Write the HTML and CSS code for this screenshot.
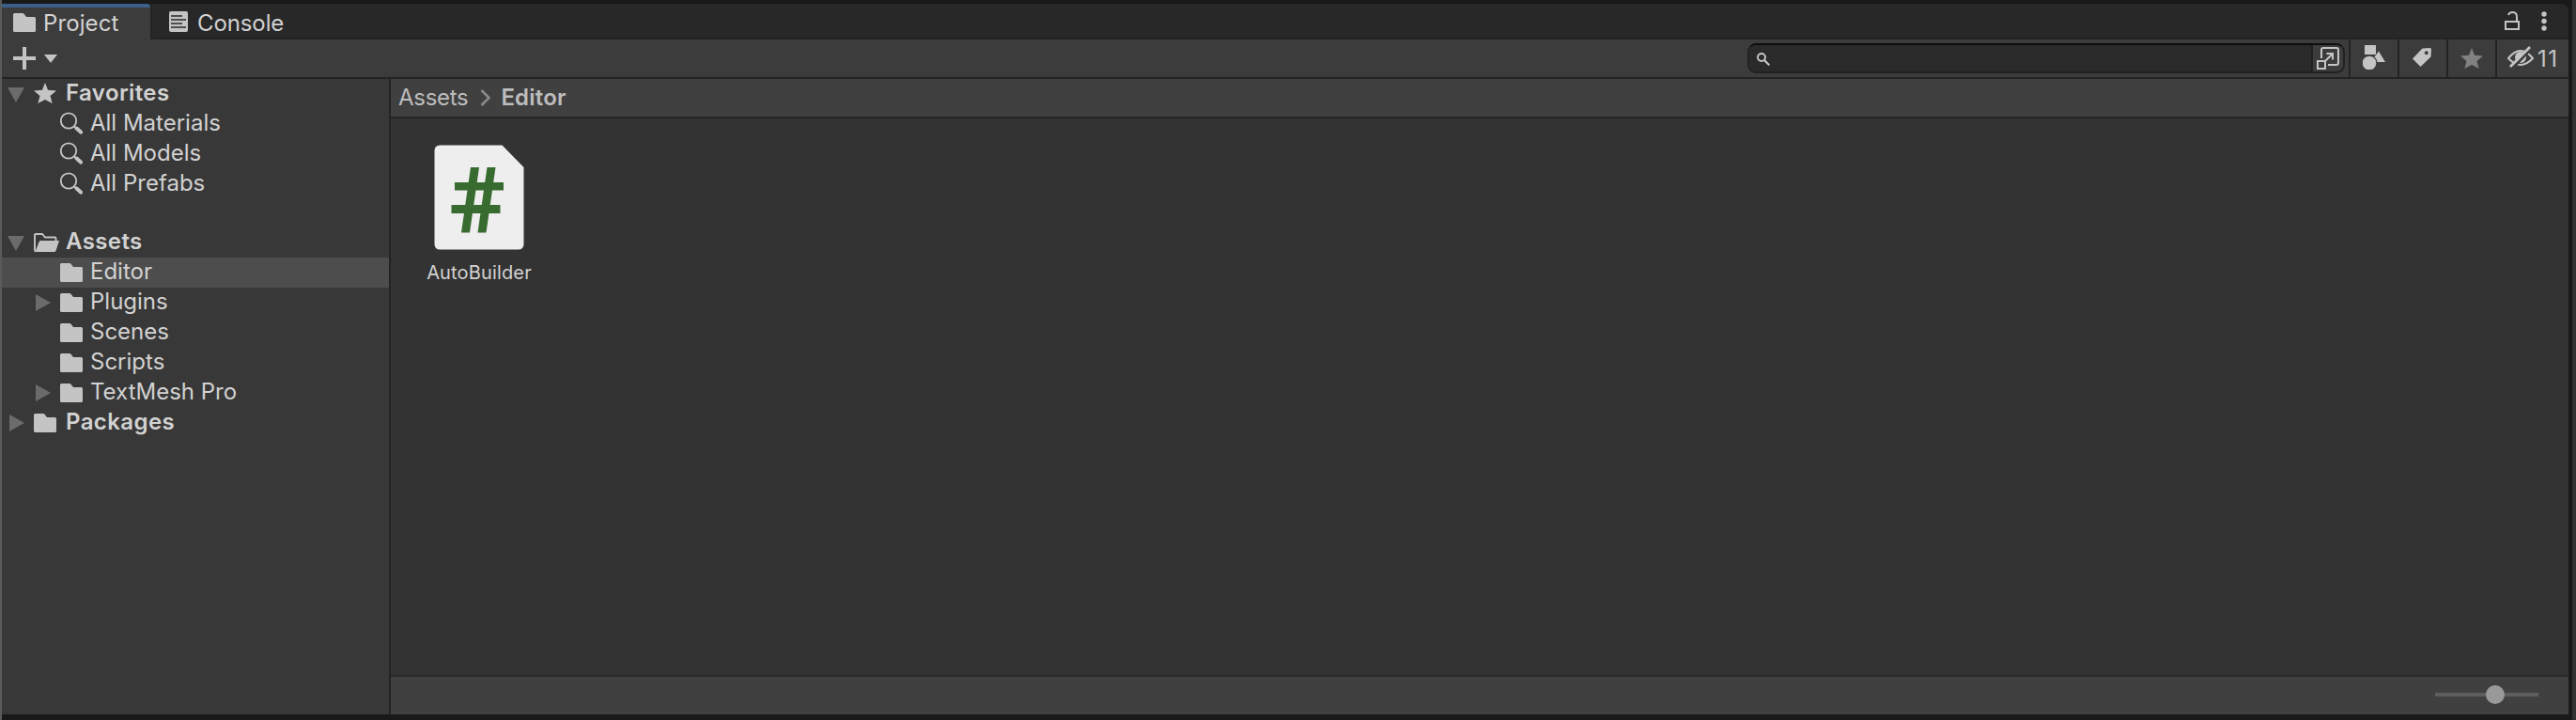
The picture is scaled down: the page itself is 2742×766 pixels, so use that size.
FILE: index.html
```html
<!DOCTYPE html>
<html lang="en">
<head>
<meta charset="utf-8">
<title>Project</title>
<link rel="stylesheet" href="styles.css">
</head>
<body>
<svg class="defs" width="0" height="0">
  <defs>
    <symbol id="folder" viewBox="0 0 24 20"><path d="M1.5 0H10Q11 0 11.7 1L14 4H22.5Q24 4 24 5.500V18.500Q24 20 22.500 20H1.500Q0 20 0 18.500V1.500Q0 0 1.500 0Z"/></symbol>
    <symbol id="star" viewBox="0 0 24 22"><path d="M12 0L15 7.700L24 8.400L17.500 14L19.700 22L12 17.900L4.300 22L6.500 14L0 8.400L9 7.700Z"/></symbol>
    <symbol id="find" viewBox="0 0 24 24"><circle cx="9" cy="9.500" r="8.200" fill="none" stroke="currentColor" stroke-width="1.800"/><path d="M17.600 17.600L22 21.600" fill="none" stroke="currentColor" stroke-width="4" stroke-linecap="round"/><path d="M14.500 15L18 18" stroke="currentColor" stroke-width="2"/></symbol>
    <symbol id="open" viewBox="0 0 27 20"><path d="M1 18.500V2Q1 1 2 1H9L12 4.500H22.500Q23.500 4.500 23.500 5.500V8" fill="none" stroke="currentColor" stroke-width="1.900"/><path d="M7.500 8H27L23.600 18.500Q23.200 20 21.700 20H1.500Q0 20 0 18.500L2 18.500L5.600 9.200Q6 8 7.500 8Z"/></symbol>
    <symbol id="down" viewBox="0 0 18 16"><path d="M0 0H18L9 16Z"/></symbol>
    <symbol id="right" viewBox="0 0 16 18"><path d="M0 0L16 9L0 18Z"/></symbol>
  </defs>
</svg>
<div class="window">
  <header class="tabs">
    <div class="tab active"><svg width="24" height="20"><use href="#folder"/></svg><span>Project</span></div>
    <div class="tab console">
      <svg width="20" height="22" viewBox="0 0 20 22"><rect width="20" height="22" rx="2"/><path d="M2 5H14M2 9H18M2 13H14M2 17H18" stroke="#282828" stroke-width="1.600"/></svg>
      <span>Console</span>
    </div>
    <div class="window-tools">
      <svg width="16" height="20" viewBox="0 0 16 20"><path d="M1 11H15V19H1Z M13 11V6Q13 1 8.500 1Q5 1 4 4" fill="none" stroke="currentColor" stroke-width="2"/></svg>
      <svg width="6" height="21" viewBox="0 0 6 21"><circle cx="3" cy="3" r="2.700"/><circle cx="3" cy="10.500" r="2.700"/><circle cx="3" cy="18" r="2.700"/></svg>
    </div>
  </header>
  <div class="toolbar">
    <div class="add">
      <svg width="24" height="24" viewBox="0 0 24 24"><path d="M10 0H14V10H24V14H14V24H10V14H0V10H10Z"/></svg>
      <svg width="14" height="9" viewBox="0 0 14 9"><path d="M0 0H14L7 9Z"/></svg>
    </div>
    <div class="search">
      <div class="field"><svg width="14" height="14" viewBox="0 0 14 14"><circle cx="5" cy="5" r="4" fill="none" stroke="currentColor" stroke-width="2"/><path d="M8 8L13.300 13.300" stroke="currentColor" stroke-width="2.200"/></svg></div>
      <div class="jump"><svg width="24" height="24" viewBox="0 0 24 24"><g fill="none" stroke="currentColor" stroke-width="2"><path d="M5 12V3Q5 1 7 1H21Q23 1 23 3V17Q23 19 21 19H12"/><path d="M1 15H9V23H1Z"/><path d="M9.500 14.500L17 7M10.500 7H17V13.500"/></g></svg></div>
    </div>
    <button class="tool"><svg width="24" height="26" viewBox="0 0 24 26"><path d="M2 0H14V10H2Z"/><path d="M17 6.500L24 18H13.500L12 13Z"/><circle cx="7" cy="19" r="8.500" fill="#3c3c3c"/><circle cx="7" cy="19" r="7.300"/></svg></button>
    <button class="tool"><svg class="tag" width="20" height="20" viewBox="0 0 20 20"><path fill-rule="evenodd" d="M10.500 0.500L18.500 0Q20 0 20 1.500L19.500 9.500L8.500 20L0 11.500Z M14.800 3.200A2 2 0 1 0 14.801 3.200Z"/></svg></button>
    <button class="tool dim"><svg width="24" height="22"><use href="#star"/></svg></button>
    <button class="tool hidden-count"><svg width="28" height="24" viewBox="0 0 28 24"><path d="M1 13Q14 -3 27 13Q14 27 1 13Z" fill="none" stroke="currentColor" stroke-width="2"/><circle cx="14" cy="12" r="6"/><path d="M5 24L26 2" stroke="#3c3c3c" stroke-width="3"/><path d="M3 22L24 1" stroke="currentColor" stroke-width="2.800"/></svg><span>11</span></button>
  </div>
  <div class="body">
    <nav class="tree">
      <div class="row root"><svg class="fold" width="18" height="16"><use href="#down"/></svg><svg class="icon star" width="24" height="22"><use href="#star"/></svg><span>Favorites</span></div>
      <div class="row child"><svg class="icon find" width="24" height="24"><use href="#find"/></svg><span>All Materials</span></div>
      <div class="row child"><svg class="icon find" width="24" height="24"><use href="#find"/></svg><span>All Models</span></div>
      <div class="row child"><svg class="icon find" width="24" height="24"><use href="#find"/></svg><span>All Prefabs</span></div>
      <div class="row root second"><svg class="fold" width="18" height="16"><use href="#down"/></svg><svg class="icon open" width="27" height="20"><use href="#open"/></svg><span>Assets</span></div>
      <div class="row child selected"><svg class="icon" width="24" height="20"><use href="#folder"/></svg><span>Editor</span></div>
      <div class="row child"><svg class="fold" width="16" height="18"><use href="#right"/></svg><svg class="icon" width="24" height="20"><use href="#folder"/></svg><span>Plugins</span></div>
      <div class="row child"><svg class="icon" width="24" height="20"><use href="#folder"/></svg><span>Scenes</span></div>
      <div class="row child"><svg class="icon" width="24" height="20"><use href="#folder"/></svg><span>Scripts</span></div>
      <div class="row child"><svg class="fold" width="16" height="18"><use href="#right"/></svg><svg class="icon" width="24" height="20"><use href="#folder"/></svg><span>TextMesh Pro</span></div>
      <div class="row root"><svg class="fold" width="16" height="18"><use href="#right"/></svg><svg class="icon" width="24" height="20"><use href="#folder"/></svg><span>Packages</span></div>
    </nav>
    <main class="browser">
      <div class="crumbs"><span>Assets</span><svg width="12" height="18" viewBox="0 0 12 18"><path d="M1.500 1L9.500 9L1.500 17" fill="none" stroke="currentColor" stroke-width="2.600"/></svg><b>Editor</b></div>
      <div class="grid">
        <div class="asset">
          <svg width="96" height="112" viewBox="0 0 96 112"><path fill="#eee" d="M6.500 0.500H72.500L95.500 24V105.500Q95.500 111.500 89.500 111.500H6.500Q0.500 111.500 0.500 105.500V6.500Q0.500 0.500 6.500 0.500Z"/><g fill="#386b30"><path d="M39 24H48L38 93.500H29Z"/><path d="M56.500 24H65.500L55.500 93.500H46.500Z"/><path d="M22 40H74V48.500H22ZM18.500 64H70.500V73H18.500Z"/></g></svg>
          <span>AutoBuilder</span>
        </div>
      </div>
      <footer class="status"><div class="slider"><div class="thumb"></div></div></footer>
    </main>
  </div>
</div>
</body>
</html>
```
FILE: styles.css
```css
* { box-sizing: border-box; }
body {
  margin: 0;
  width: 2742px;
  height: 766px;
  overflow: hidden;
  background: #191919;
  border-left: 2px solid #5a5a5a;
  border-right: 4px solid #333;
  font: 24px/32px Inter, "Liberation Sans", sans-serif;
  color: #d2d2d2;
}
svg { display: block; flex: none; fill: currentColor; color: #c4c4c4; }
.defs { position: absolute; }
span, b { white-space: nowrap; }
.window {
  height: 760px;
  margin-right: 4px;
  padding-top: 4px;
  display: flex;
  flex-direction: column;
}
.tabs {
  height: 38px;
  display: flex;
  background: #282828;
  border-bottom: 2px solid #232323;
  border-top-right-radius: 8px;
}
.tab { display: flex; align-items: flex-start; height: 38px; }
.tab span { margin-top: 5px; }
.active {
  width: 158px;
  padding-left: 12px;
  gap: 8px;
  background: #3c3c3c;
  border-top: 4px solid #3a5f88;
  border-top-right-radius: 4px;
}
.active svg { margin-top: 6px; }
.active span { margin-top: 1px; letter-spacing: 0.1px; }
.console { padding-left: 18px; height: 36px; gap: 10px; border-left: 2px solid #232323; }
.console svg { margin-top: 8px; }
.console span { letter-spacing: -0.1px; }
.window-tools { margin-left: auto; display: flex; gap: 23px; padding: 8px 23px 0 0; }
.toolbar {
  height: 42px;
  display: flex;
  background: #3c3c3c;
  border-bottom: 2px solid #232323;
}
.add { display: flex; gap: 9px; padding: 8px 0 0 12px; }
.add svg + svg { margin-top: 8px; }
.search {
  width: 636px;
  height: 32px;
  margin: 4px 4px 0 auto;
  display: flex;
  border: 2px solid #212121;
  border-radius: 9px;
  overflow: hidden;
}
.field {
  flex: 1;
  background: #2a2a2a;
  border-right: 2px solid #212121;
  padding: 8px;
}
.search { border-top-color: #0d0d0d; }
.jump { width: 32px; padding: 2px 0 0 4px; background: #3c3c3c; }
.tool {
  width: 52px;
  height: 40px;
  padding: 6px 0 0 13px;
  display: flex;
  background: #3c3c3c;
  border: 0;
  border-left: 2px solid #232323;
  font: inherit;
  color: inherit;
}
.tag { margin: 3px 0 0 1px; }
.dim svg { color: #818181; margin-top: 3px; }
.hidden-count { width: 78px; padding-left: 11px; padding-top: 7px; gap: 4px; }
.hidden-count span { margin-top: -2px; color: #c4c4c4; letter-spacing: 1.5px; }
.body { flex: 1; display: flex; min-height: 0; }
.tree { width: 414px; background: #383838; border-right: 2px solid #232323; }
.row { height: 32px; display: grid; align-items: start; line-height: 30px; }
.row svg.icon { grid-column: 2; margin-top: 6px; }
.row svg.star { margin-top: 4px; }
.row svg.find { margin-top: 3px; }
.row svg.fold { grid-column: 1; margin-top: 7px; color: #6b6b6b; }
.row span { grid-column: 3; grid-row: 1; }
.row svg { grid-row: 1; }
.root span { letter-spacing: 0.4px; }
.root { grid-template-columns: 28px 34px 1fr; padding-left: 6px; font-weight: 600; }
.root svg.fold[width="16"] { margin-left: 2px; }
.root svg.fold[width="18"] { margin-top: 9px; }
.child { grid-template-columns: 26px 32px 1fr; padding-left: 36px; }
.second { margin-top: 30px; }
.selected { background: #4d4d4d; }
.browser { flex: 1; display: flex; flex-direction: column; background: #333; }
.crumbs {
  height: 42px;
  display: flex;
  align-items: flex-start;
  padding: 4px 0 0 8px;
  background: #404040;
  border-bottom: 2px solid #282828;
  color: #bdbdbd;
}
.crumbs span { letter-spacing: -0.3px; }
.crumbs svg { margin: 7px 10px 0 13px; color: #8a8a8a; }
.crumbs b { font-weight: 600; letter-spacing: 0.2px; }
.grid { flex: 1; padding: 28px 0 0 24px; }
.asset { width: 140px; display: flex; flex-direction: column; align-items: center; }
.asset span { font-size: 20px; line-height: 24px; margin-top: 12px; letter-spacing: 0.15px; }
.status {
  height: 42px;
  background: #404040;
  border-top: 2px solid #282828;
  display: flex;
  justify-content: flex-end;
  align-items: center;
  padding: 0 32px 2px 0;
}
.slider { width: 110px; height: 4px; background: #5e5e5e; display: flex; align-items: center; padding-left: 54px; }
.thumb { width: 20px; height: 20px; border-radius: 50%; background: #999; flex: none; }
```
